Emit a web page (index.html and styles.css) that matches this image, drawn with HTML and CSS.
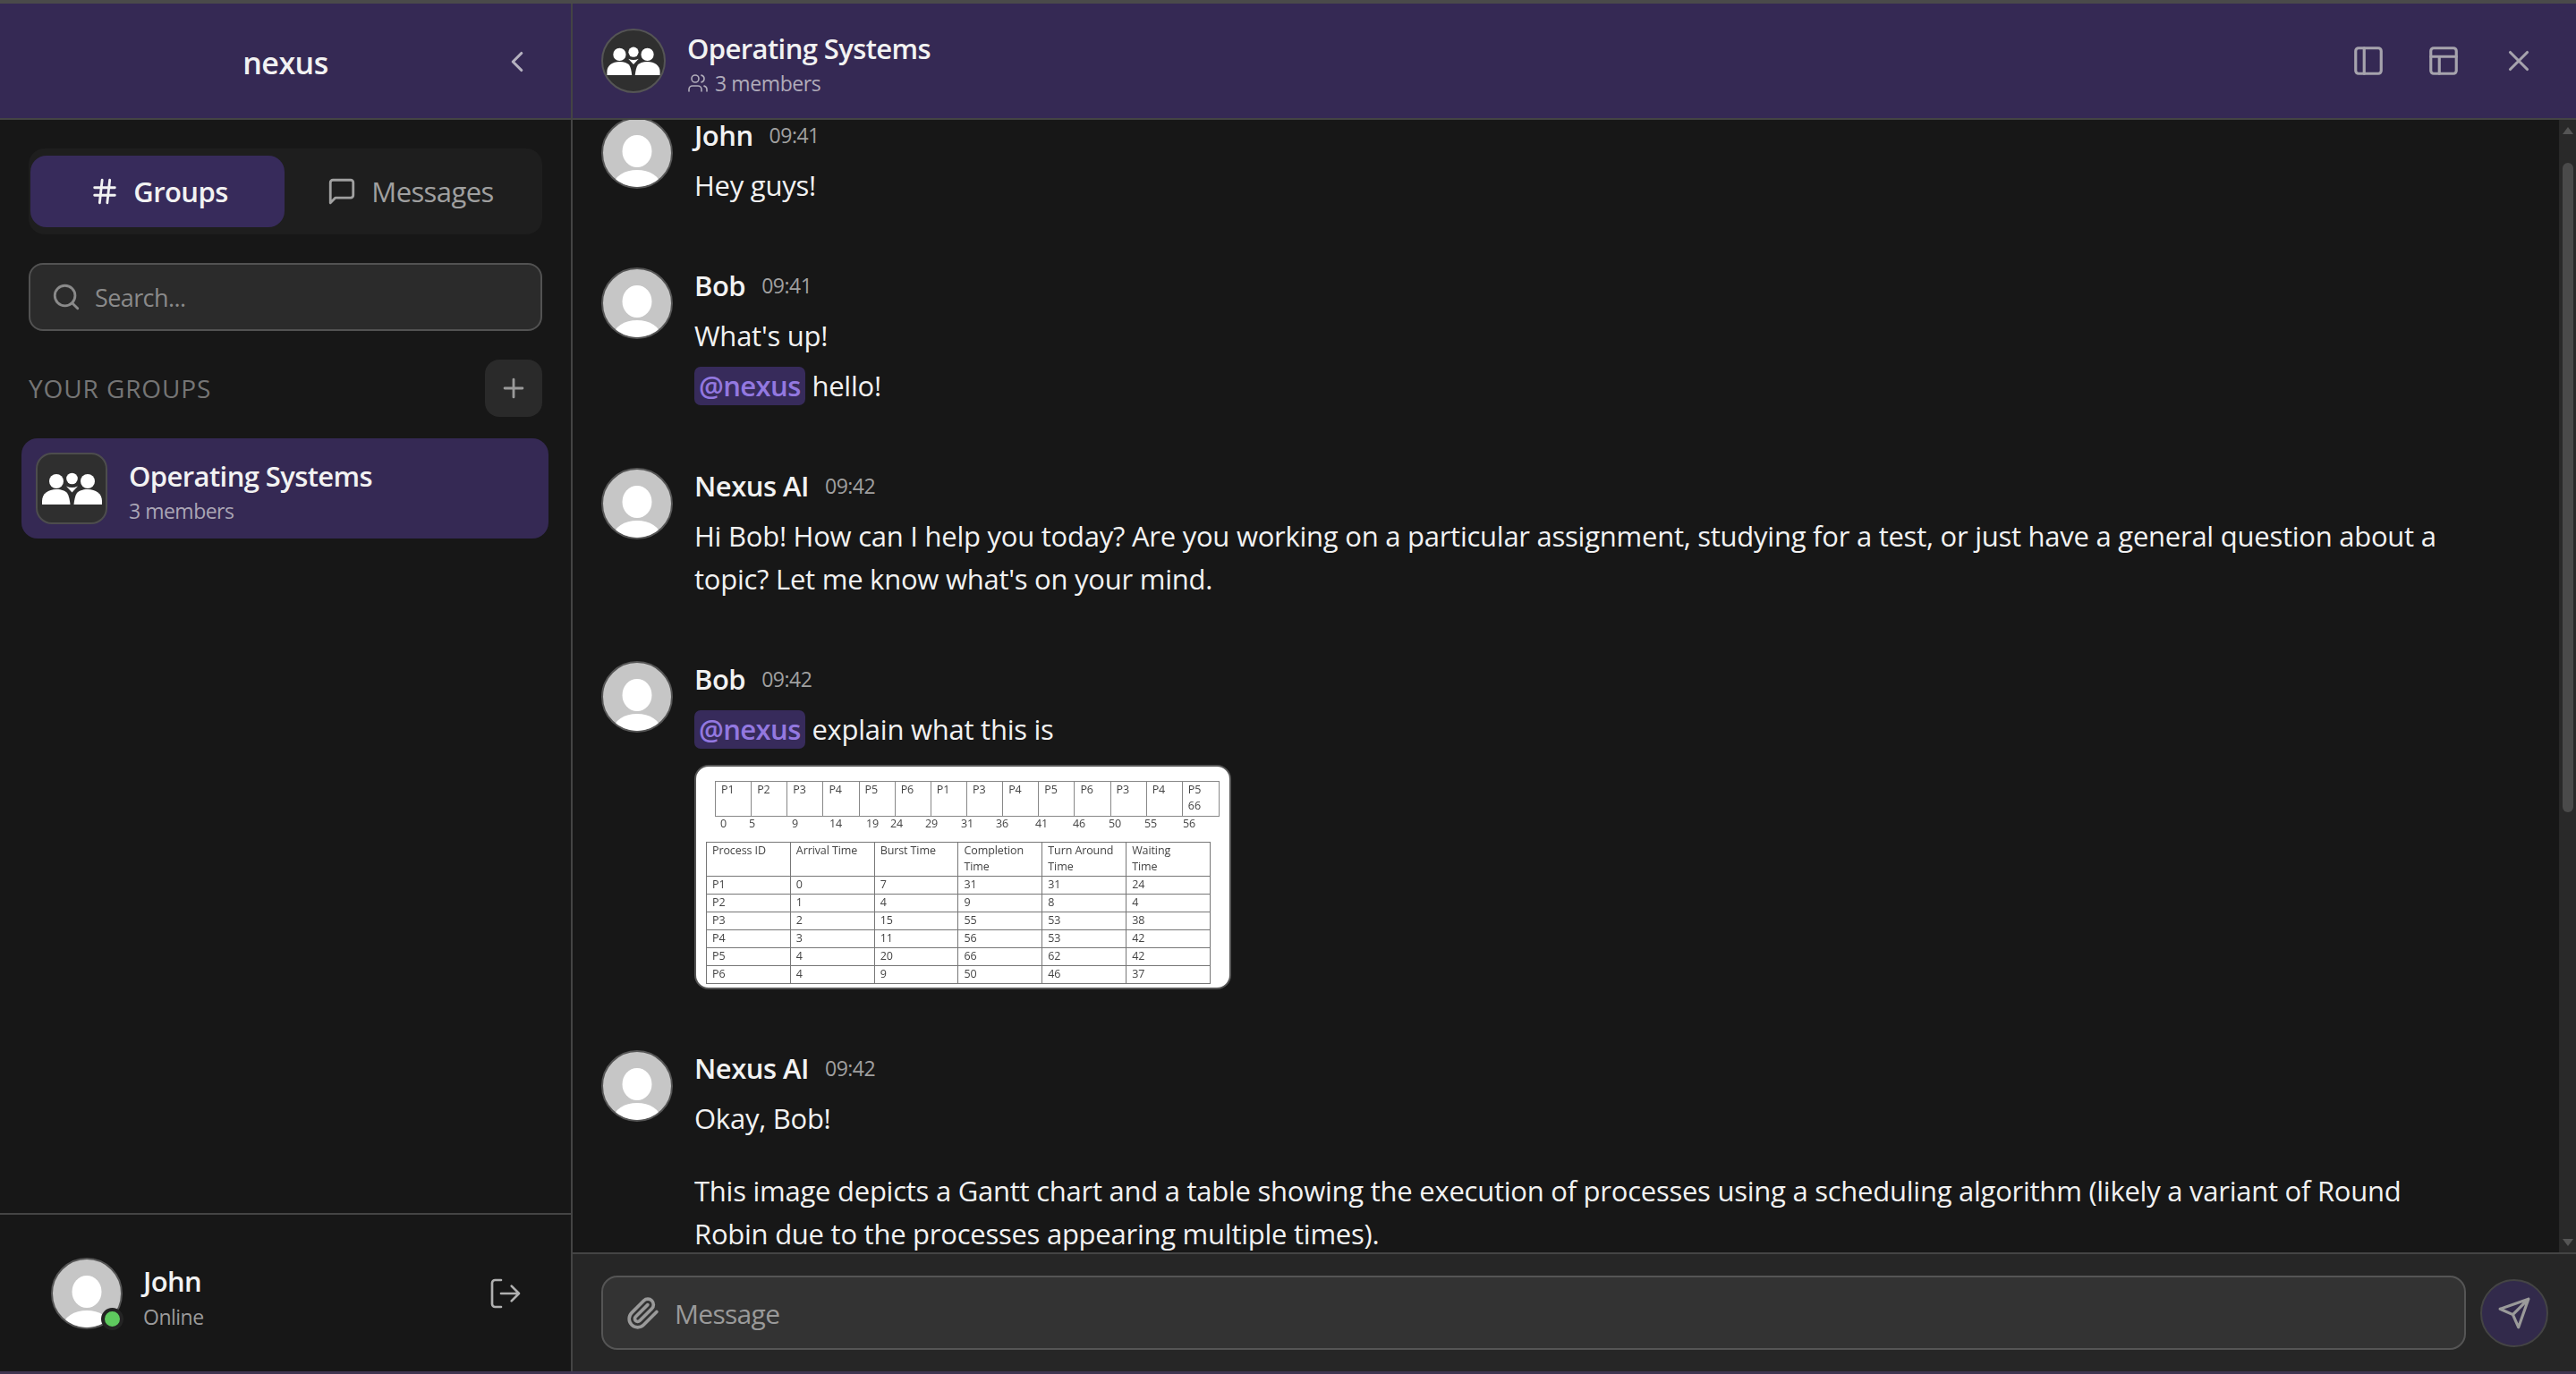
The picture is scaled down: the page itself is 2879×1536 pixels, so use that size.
FILE: index.html
```html
<!DOCTYPE html>
<html lang="en">
<head>
  <meta charset="UTF-8">
  <meta name="viewport" content="width=device-width, initial-scale=1.0">
  <title>nexus</title>
  <link rel="stylesheet" href="styles.css">
</head>
<body>

<svg class="defs" width="0" height="0">
  <symbol id="avatar" viewBox="0 0 80 80">
    <clipPath id="avatarClip"><circle cx="40" cy="40" r="38"/></clipPath>
    <circle cx="40" cy="40" r="39" fill="#c6c6c6" stroke="#555" stroke-width="2"/>
    <g clip-path="url(#avatarClip)" fill="#fff">
      <ellipse cx="40" cy="38" rx="16.5" ry="18"/>
      <ellipse cx="40" cy="76" rx="26" ry="17"/>
    </g>
  </symbol>
  <symbol id="people" viewBox="0 0 67 36">
    <g fill="#fff">
      <circle cx="16" cy="10" r="8"/>
      <circle cx="33.500" cy="7" r="6.300"/>
      <circle cx="51" cy="10" r="8"/>
      <path d="M0 36v-4c0-8 7-13 16-13 6 0 10 2 12 4 2 3 3 8 3.500 13z"/>
      <path d="M67 36v-4c0-8-7-13-16-13-6 0-10 2-12 4-2 3-3 8-3.500 13z"/>
      <path d="M27 15.500q6.500 3 13 0l-6.500 7z"/>
    </g>
  </symbol>
</svg>

<div class="app">
  <div class="top-strip"></div>

  <div class="main">
    <!-- Sidebar -->
    <aside class="sidebar">
      <div class="side-head">
        <span class="brand">nexus</span>
        <svg class="ico collapse" viewBox="0 0 24 24"><path d="m15 18-6-6 6-6"/></svg>
      </div>

      <div class="tabs">
        <div class="tab active">
          <svg class="ico" viewBox="0 0 24 24"><path d="M4 9h16M4 15h16M10 3 8 21M16 3l-2 18"/></svg>
          Groups
        </div>
        <div class="tab">
          <svg class="ico" viewBox="0 0 24 24"><path d="M21 15a2 2 0 0 1-2 2H7l-4 4V5a2 2 0 0 1 2-2h14a2 2 0 0 1 2 2z"/></svg>
          Messages
        </div>
      </div>

      <div class="search">
        <svg class="ico" viewBox="0 0 24 24"><circle cx="11" cy="11" r="8"/><path d="m21 21-4.300-4.300"/></svg>
        <span>Search...</span>
      </div>

      <div class="groups-head">
        <span class="groups-label">YOUR GROUPS</span>
        <div class="add-btn">
          <svg class="ico" viewBox="0 0 24 24"><path d="M5 12h14M12 5v14"/></svg>
        </div>
      </div>

      <div class="group-item">
        <div class="group-icon"><svg class="people" viewBox="0 0 67 36"><use href="#people"/></svg></div>
        <div class="group-text">
          <div class="group-name">Operating Systems</div>
          <div class="group-sub">3 members</div>
        </div>
      </div>

      <div class="side-foot">
        <div class="me">
          <svg class="avatar" viewBox="0 0 80 80"><use href="#avatar"/></svg>
          <span class="online-dot"></span>
        </div>
        <div class="me-info">
          <div class="me-name">John</div>
          <div class="me-status">Online</div>
        </div>
        <svg class="ico logout" viewBox="0 0 24 24"><path d="M9 21H5a2 2 0 0 1-2-2V5a2 2 0 0 1 2-2h4M16 17l5-5-5-5M21 12H9"/></svg>
      </div>
    </aside>

    <!-- Chat -->
    <section class="chat">
      <header class="chat-head">
        <div class="chat-avatar"><svg class="people" viewBox="0 0 67 36"><use href="#people"/></svg></div>
        <div class="chat-title">
          <div class="chat-name">Operating Systems</div>
          <div class="chat-sub">
            <svg class="ico" viewBox="0 0 24 24"><path d="M16 21v-2a4 4 0 0 0-4-4H6a4 4 0 0 0-4 4v2"/><circle cx="9" cy="7" r="4"/><path d="M22 21v-2a4 4 0 0 0-3-3.870M16 3.130a4 4 0 0 1 0 7.750"/></svg>
            3 members
          </div>
        </div>
        <div class="chat-tools">
          <svg class="ico" viewBox="0 0 24 24"><rect x="3" y="3" width="18" height="18" rx="2"/><path d="M9 3v18"/></svg>
          <svg class="ico" viewBox="0 0 24 24"><rect x="3" y="3" width="18" height="18" rx="2"/><path d="M3 9h18M9 21V9"/></svg>
          <svg class="ico" viewBox="0 0 24 24"><path d="M18 6 6 18M6 6l12 12"/></svg>
        </div>
      </header>

      <div class="chat-body">
        <div class="messages">
          <div class="msg">
            <svg class="avatar" viewBox="0 0 80 80"><use href="#avatar"/></svg>
            <div class="msg-main">
              <div class="msg-top"><span class="msg-name">John</span><span class="msg-time">09:41</span></div>
              <p>Hey guys!</p>
            </div>
          </div>

          <div class="msg">
            <svg class="avatar" viewBox="0 0 80 80"><use href="#avatar"/></svg>
            <div class="msg-main">
              <div class="msg-top"><span class="msg-name">Bob</span><span class="msg-time">09:41</span></div>
              <p>What's up!</p>
              <p class="next"><span class="mention">@nexus</span> hello!</p>
            </div>
          </div>

          <div class="msg">
            <svg class="avatar" viewBox="0 0 80 80"><use href="#avatar"/></svg>
            <div class="msg-main">
              <div class="msg-top"><span class="msg-name">Nexus AI</span><span class="msg-time">09:42</span></div>
              <p>Hi Bob! How can I help you today? Are you working on a particular assignment, studying for a test, or just have a general question about a topic? Let me know what's on your mind.</p>
            </div>
          </div>

          <div class="msg">
            <svg class="avatar" viewBox="0 0 80 80"><use href="#avatar"/></svg>
            <div class="msg-main">
              <div class="msg-top"><span class="msg-name">Bob</span><span class="msg-time">09:42</span></div>
              <p><span class="mention">@nexus</span> explain what this is</p>
              <div class="attachment">
                <div class="shot">
                  <div class="gantt">
                    <span>P1</span><span>P2</span><span>P3</span><span>P4</span><span>P5</span><span>P6</span><span>P1</span>
                    <span>P3</span><span>P4</span><span>P5</span><span>P6</span><span>P3</span><span>P4</span><span>P5<br>66</span>
                  </div>
                  <div class="ticks">
                    <span>0</span><span>5</span><span>9</span><span>14</span><span>19</span><span>24</span><span>29</span>
                    <span>31</span><span>36</span><span>41</span><span>46</span><span>50</span><span>55</span><span>56</span>
                  </div>
                  <table class="proc">
                    <tr class="proc-head"><td>Process ID</td><td>Arrival Time</td><td>Burst Time</td><td>Completion Time</td><td>Turn Around Time</td><td>Waiting<br>Time</td></tr>
                    <tr><td>P1</td><td>0</td><td>7</td><td>31</td><td>31</td><td>24</td></tr>
                    <tr><td>P2</td><td>1</td><td>4</td><td>9</td><td>8</td><td>4</td></tr>
                    <tr><td>P3</td><td>2</td><td>15</td><td>55</td><td>53</td><td>38</td></tr>
                    <tr><td>P4</td><td>3</td><td>11</td><td>56</td><td>53</td><td>42</td></tr>
                    <tr><td>P5</td><td>4</td><td>20</td><td>66</td><td>62</td><td>42</td></tr>
                    <tr><td>P6</td><td>4</td><td>9</td><td>50</td><td>46</td><td>37</td></tr>
                  </table>
                </div>
              </div>
            </div>
          </div>

          <div class="msg">
            <svg class="avatar" viewBox="0 0 80 80"><use href="#avatar"/></svg>
            <div class="msg-main">
              <div class="msg-top"><span class="msg-name">Nexus AI</span><span class="msg-time">09:42</span></div>
              <p class="para">Okay, Bob!</p>
              <p>This image depicts a Gantt chart and a table showing the execution of processes using a scheduling algorithm (likely a variant of Round Robin due to the processes appearing multiple times).</p>
            </div>
          </div>
        </div>

        <div class="scrollbar">
          <div class="arrow-up"></div>
          <div class="thumb"></div>
          <div class="arrow-down"></div>
        </div>
      </div>

      <footer class="composer">
        <div class="input">
          <svg class="ico" viewBox="0 0 24 24"><path d="m21.440 11.050-9.190 9.190a6 6 0 0 1-8.490-8.490l8.570-8.570A4 4 0 1 1 18 8.840l-8.590 8.570a2 2 0 0 1-2.830-2.830l8.490-8.480"/></svg>
          <span>Message</span>
        </div>
        <div class="send">
          <svg class="ico" viewBox="0 0 24 24"><path d="m22 2-7 20-4-9-9-4zM22 2 11 13"/></svg>
        </div>
      </footer>
    </section>
  </div>

  <div class="bottom-strip"></div>
</div>

</body>
</html>
```

FILE: styles.css
```css
* {
  box-sizing: border-box;
}
html, body {
  height: 100%;
}
body {
  margin: 0;
  background-color: #171717;
  color: #f2f2f2;
  font-family: "Open Sans", "Noto Sans", sans-serif;
  font-size: 31px;
  overflow: hidden;
}
p {
  margin: 0;
}
.defs {
  display: block;
  height: 0;
}
.ico {
  fill: none;
  stroke: currentColor;
  stroke-width: 2;
  stroke-linecap: round;
  stroke-linejoin: round;
  flex: none;
}
.app {
  height: 100vh;
  display: flex;
  flex-direction: column;
}
.top-strip {
  height: 4px;
  background-color: #4a4a4a;
  flex: none;
}
.bottom-strip {
  height: 3px;
  background-color: #3f3550;
  flex: none;
}
.main {
  flex: 1;
  min-height: 0;
  display: flex;
}

/* sidebar */
.sidebar {
  width: 640px;
  flex: none;
  border-right: 2px solid #444;
  display: flex;
  flex-direction: column;
}
.side-head {
  height: 130px;
  flex: none;
  background-color: #352954;
  border-bottom: 2px solid #444;
  position: relative;
  display: flex;
  align-items: center;
  justify-content: center;
  padding-top: 4px;
}
.brand {
  font-size: 34px;
  font-weight: 600;
  letter-spacing: -0.5px;
}
.collapse {
  position: absolute;
  right: 41px;
  top: 46px;
  width: 38px;
  height: 38px;
  color: #b5b1bf;
}
.tabs {
  margin: 32px 32px 0;
  height: 96px;
  flex: none;
  padding: 8px 2px;
  background-color: #1e1e1e;
  border-radius: 18px;
  display: flex;
}
.tab {
  flex: 1;
  border-radius: 18px;
  display: flex;
  align-items: center;
  justify-content: center;
  gap: 16px;
  padding-right: 5px;
  color: #a0a0a0;
  letter-spacing: -0.6px;
}
.tab .ico {
  width: 34px;
  height: 34px;
}
.tab.active {
  background-color: #372b5b;
  color: #f2f2f2;
  font-weight: 600;
  gap: 15px;
  padding-right: 0;
  padding-left: 3px;
}
.search {
  margin: 32px 32px 0;
  height: 76px;
  flex: none;
  padding: 0 23px;
  background-color: #2b2b2b;
  border: 2px solid #525252;
  border-radius: 16px;
  display: flex;
  align-items: center;
  gap: 15px;
  color: #8a8a8a;
  font-size: 27px;
  letter-spacing: -0.6px;
}
.search .ico {
  width: 34px;
  height: 34px;
}
.groups-head {
  margin: 32px 32px 0;
  height: 64px;
  flex: none;
  display: flex;
  align-items: center;
  justify-content: space-between;
}
.groups-label {
  font-size: 28px;
  letter-spacing: 0.9px;
  color: #757575;
}
.add-btn {
  width: 64px;
  height: 64px;
  border-radius: 16px;
  background-color: #2a2a2a;
  color: #9a9a9a;
  display: flex;
  align-items: center;
  justify-content: center;
}
.add-btn .ico {
  width: 34px;
  height: 34px;
}
.group-item {
  margin: 24px 25px 0 24px;
  height: 112px;
  flex: none;
  padding: 0 16px;
  background-color: #352954;
  border-radius: 18px;
  display: flex;
  align-items: center;
  gap: 24px;
}
.group-icon {
  width: 80px;
  height: 80px;
  flex: none;
  background-color: #2f2f2f;
  border: 2px solid #4d4d4d;
  border-radius: 18px;
  display: flex;
  align-items: center;
  justify-content: center;
}
.people {
  width: 67px;
  height: 36px;
}
.group-text {
  padding-top: 6px;
}
.group-name {
  font-weight: 600;
  letter-spacing: -0.6px;
  line-height: 44px;
}
.group-sub {
  font-size: 23px;
  letter-spacing: -0.5px;
  color: #aaa5b5;
  line-height: 34px;
}
.side-foot {
  margin-top: auto;
  height: 177px;
  flex: none;
  border-top: 2px solid #444;
  padding: 0 53px 0 57px;
  display: flex;
  align-items: center;
  gap: 23px;
}
.me {
  position: relative;
  width: 80px;
  height: 80px;
  flex: none;
}
.avatar {
  width: 80px;
  height: 80px;
  flex: none;
  display: block;
}
.online-dot {
  position: absolute;
  right: -1px;
  bottom: -1px;
  width: 25px;
  height: 25px;
  border-radius: 50%;
  background-color: #5ec95e;
  border: 4px solid #242424;
}
.me-info {
  padding-top: 12px;
}
.me-name {
  font-weight: 600;
  letter-spacing: -0.6px;
  line-height: 40px;
}
.me-status {
  font-size: 23px;
  letter-spacing: -0.5px;
  color: #9a9a9a;
  line-height: 40px;
}
.logout {
  margin-left: auto;
  width: 40px;
  height: 40px;
  stroke-width: 1.600;
  color: #b0b0b0;
}

/* chat */
.chat {
  flex: 1;
  min-width: 0;
  display: flex;
  flex-direction: column;
}
.chat-head {
  height: 130px;
  flex: none;
  background-color: #352954;
  border-bottom: 2px solid #444;
  padding: 0 45px 0 32px;
  display: flex;
  align-items: center;
  gap: 24px;
  position: relative;
  z-index: 1;
}
.chat-avatar {
  width: 72px;
  height: 72px;
  flex: none;
  border-radius: 50%;
  background-color: #2f2f2f;
  border: 2px solid #555;
  display: flex;
  align-items: center;
  justify-content: center;
}
.chat-avatar .people {
  width: 60px;
  height: 32px;
}
.chat-title {
  padding-top: 8px;
}
.chat-name {
  font-weight: 600;
  letter-spacing: -0.6px;
  line-height: 42px;
}
.chat-sub {
  font-size: 23px;
  letter-spacing: -0.4px;
  color: #b0acba;
  line-height: 36px;
  display: flex;
  align-items: center;
  gap: 7px;
}
.chat-sub .ico {
  width: 24px;
  height: 24px;
  stroke-width: 1.600;
}
.chat-tools {
  margin-left: auto;
  display: flex;
  gap: 46px;
  color: #a6a3ad;
}
.chat-tools .ico {
  width: 38px;
  height: 38px;
}
.chat-body {
  flex: 1;
  min-height: 0;
  display: flex;
}
/* list is pulled under the header so the first avatar sits cut off, as when scrolled */
.messages {
  flex: 1;
  min-width: 0;
  overflow: hidden;
  margin-top: -3px;
  padding: 0 32px;
}
.msg {
  display: flex;
  gap: 24px;
  margin-bottom: 68px;
}
.msg-main {
  flex: 1;
  min-width: 0;
}
.msg-top {
  height: 41px;
  margin-bottom: 11px;
  display: flex;
  align-items: center;
  gap: 18px;
}
.msg-name {
  font-weight: 600;
  line-height: 1;
  letter-spacing: -0.5px;
}
.msg-time {
  font-size: 23px;
  line-height: 1;
  color: #a0a0a0;
  letter-spacing: -0.5px;
}
.msg-main p {
  line-height: 48px;
  letter-spacing: -0.25px;
  max-width: 1970px;
}
.msg-main p.next {
  margin-top: 8px;
}
.msg-main p.para {
  margin-bottom: 33px;
}
.mention {
  display: inline-block;
  padding: 0 5px;
  height: 43px;
  line-height: 43px;
  border-radius: 7px;
  background-color: #372b5b;
  color: #9378e0;
  font-weight: 600;
  letter-spacing: -0.6px;
}

/* pasted picture of the scheduling table */
.attachment {
  margin-top: 16px;
  width: 600px;
  height: 251px;
  background-color: #fff;
  border: 2px solid #555;
  border-radius: 16px;
}
.shot {
  padding: 16px 10px 0 11px;
  color: #444;
  font-size: 12.5px;
  line-height: 18px;
  letter-spacing: -0.1px;
  filter: blur(0.4px);
}
.gantt {
  margin-left: 10px;
  width: 564px;
  height: 40px;
  display: grid;
  grid-template-columns: repeat(14, 1fr);
  border: 1px solid #888;
}
.gantt span {
  padding-left: 6px;
  border-right: 1px solid #888;
}
.gantt span:last-child {
  border-right: none;
}
.ticks {
  margin: -1px 0 0 16px;
  height: 29px;
  display: grid;
  grid-template-columns: 32px 48px 42px 41px 27px 39px 40px 39px 44px 42px 40px 40px 43px auto;
  align-items: start;
}
.proc {
  width: 564px;
  border-collapse: collapse;
  table-layout: fixed;
}
.proc td {
  border: 1px solid #777;
  padding: 0 6px;
  height: 20px;
  line-height: 18px;
  vertical-align: top;
}
.proc-head td {
  height: 38px;
}

/* fake scrollbar */
.scrollbar {
  width: 19px;
  flex: none;
  background-color: #292929;
  padding: 0 3px;
  display: flex;
  flex-direction: column;
  align-items: center;
}
.arrow-up, .arrow-down {
  width: 0;
  height: 0;
  border-left: 6px solid transparent;
  border-right: 6px solid transparent;
}
.arrow-up {
  margin-top: 8px;
  border-bottom: 8px solid #555;
}
.arrow-down {
  margin-top: auto;
  margin-bottom: 7px;
  border-top: 8px solid #555;
}
.thumb {
  margin-top: 32px;
  width: 12px;
  height: 726px;
  border-radius: 6px;
  background-color: #4a4a4a;
}

/* message box */
.composer {
  height: 133px;
  flex: none;
  background-color: #262626;
  border-top: 2px solid #444;
  padding: 24px 31px 24px 32px;
  display: flex;
  align-items: center;
  gap: 16px;
  position: relative;
}
.input {
  flex: 1;
  height: 83px;
  background-color: #333;
  border: 2px solid #555;
  border-radius: 18px;
  padding: 0 20px 0 26px;
  display: flex;
  align-items: center;
  gap: 16px;
  color: #9a9a9a;
  font-size: 30px;
  letter-spacing: -0.7px;
}
.input span {
  padding-top: 2px;
}
.input .ico {
  width: 38px;
  height: 38px;
  stroke-width: 2.300;
}
.send {
  width: 76px;
  height: 76px;
  flex: none;
  border-radius: 50%;
  background-color: #322a4b;
  border: 2px solid #444;
  color: #9a9a9a;
  display: flex;
  align-items: center;
  justify-content: center;
}
.send .ico {
  width: 38px;
  height: 38px;
}
```
